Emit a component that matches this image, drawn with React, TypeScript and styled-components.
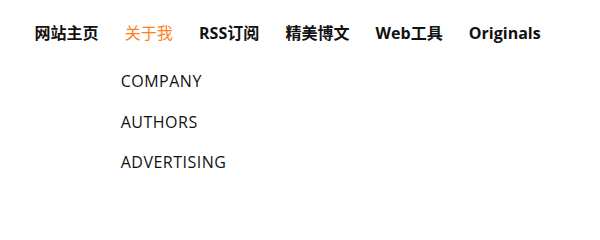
import React from "react";
import styled, { createGlobalStyle } from "styled-components";

const GlobalStyle = createGlobalStyle`
  html, body {
    margin: 0;
    min-height: 200px;
    background: #ffffff;
    font-family: "Open Sans", "Noto Sans CJK SC", sans-serif;
  }
  #root {
    min-height: 200px;
  }
`;

const NavBar = styled.ul`
  display: flex;
  list-style: none;
  margin: 0;
  padding: 0 0 0 21.5px;
  height: 66px;
`;

const NavItem = styled.li<{ $active?: boolean }>`
  position: relative;
  padding: 0 13.1px;
  line-height: 66px;
  font-size: 16px;
  font-weight: ${(p) => (p.$active ? 400 : 700)};
  color: ${(p) => (p.$active ? "#ff7f1f" : "#111111")};
  cursor: pointer;
  white-space: nowrap;
`;

const Dropdown = styled.ul`
  position: absolute;
  top: 61px;
  left: 0;
  z-index: 10;
  list-style: none;
  margin: 0;
  padding: 0 0 0 9px;
  min-width: 160px;
  background: #ffffff;
`;

const DropdownItem = styled.li`
  line-height: 40.5px;
  font-size: 16px;
  font-weight: 400;
  letter-spacing: 0.5px;
  color: #111111;
`;

const links = ["网站主页", "关于我", "RSS订阅", "精美博文", "Web工具", "Originals"];
const subLinks = ["COMPANY", "AUTHORS", "ADVERTISING"];

const App: React.FC = () => {
  return (
    <>
      <GlobalStyle />
      <nav>
        <NavBar>
          {links.map((l) => (
            <NavItem key={l} $active={l === "关于我"}>
              {l}
              {l === "关于我" && (
                <Dropdown>
                  {subLinks.map((s) => (
                    <DropdownItem key={s}>{s}</DropdownItem>
                  ))}
                </Dropdown>
              )}
            </NavItem>
          ))}
        </NavBar>
      </nav>
    </>
  );
};

export default App;
